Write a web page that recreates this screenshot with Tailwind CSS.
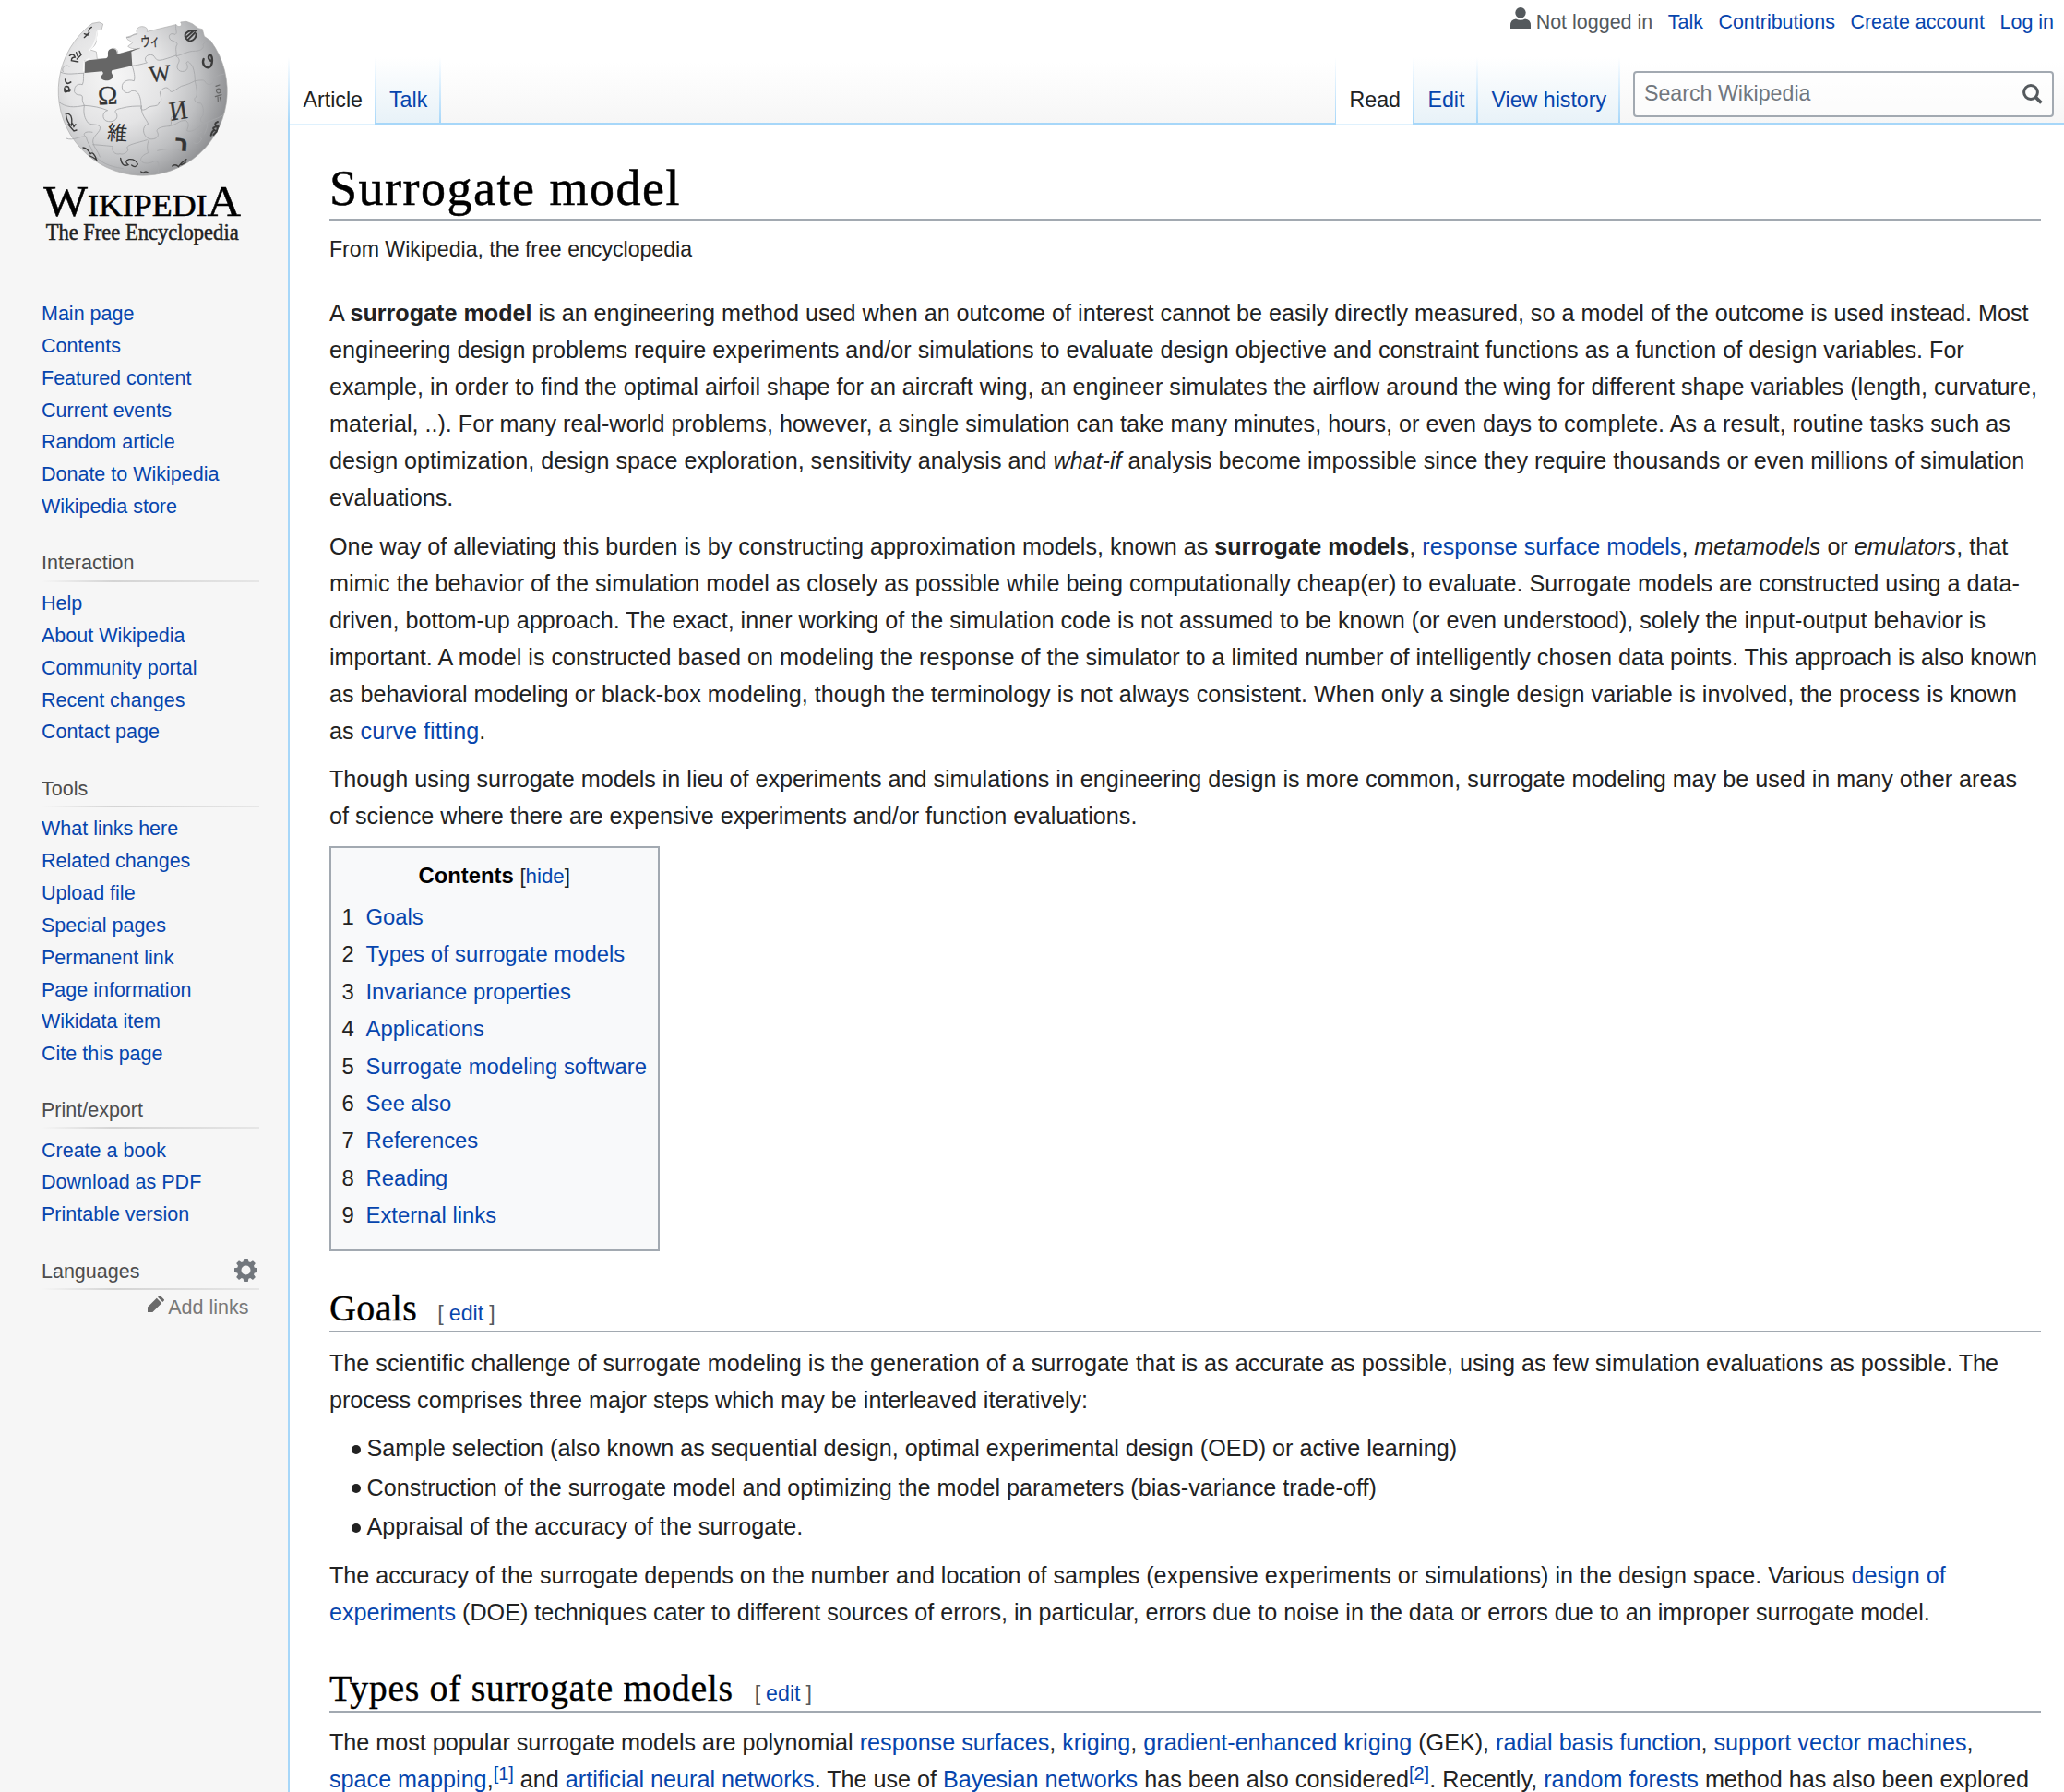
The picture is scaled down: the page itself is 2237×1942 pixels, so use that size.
<!DOCTYPE html>
<html lang="en">
<head>
<meta charset="utf-8">
<title>Surrogate model - Wikipedia</title>
<script src="https://cdn.jsdelivr.net/npm/@tailwindcss/browser@4"></script>
</head>
<body class="bg-[#f6f6f6] font-['Liberation_Sans',Arial,sans-serif] text-[#222]">
<div class="flex h-[1942px] w-[2237px] overflow-hidden">

  <!-- Sidebar -->
  <aside class="h-full w-[312px] shrink-0 bg-[linear-gradient(#fff_0,#fff_67px,#f6f6f6_134px)] text-[21.5px] text-[#0645ad]">
    <svg class="block h-[290px] w-[312px]" viewBox="0 0 936 870" font-family="'Liberation Serif', 'Noto Sans CJK JP', 'DejaVu Sans', serif">
      <defs>
        <radialGradient id="ball" gradientUnits="userSpaceOnUse" cx="370" cy="250" r="400">
          <stop offset="0" stop-color="#f6f6f6"/><stop offset=".4" stop-color="#e4e4e5"/><stop offset=".7" stop-color="#bebfc1"/><stop offset="1" stop-color="#858689"/>
        </radialGradient>
      </defs>
      <path fill="url(#ball)" stroke="#aaa" stroke-width="2" d="M300 76L322 72 335 78 330 97 315 98C321 112 308 124 313 134C310 150 298 156 294 162L313 168 316 192 352 190C355 182 348 168 360 160C375 152 385 162 383 176L455 157C440 162 418 156 416 150L430 140C425 130 412 132 412 121L447 110C440 100 445 88 460 86C475 86 482 94 478 103L572 80C582 92 596 84 587 72L606 70 625 77 645 92 658 95 664 118 685 133A274.5 274.5 0 1 1 300 76Z"/>
      <path fill="#666" d="M274 197L345 190C357 184 346 174 354 163C364 154 384 158 380 177L455 155 427 168 430 214 364 229C358 239 372 243 364 255C354 266 330 264 327 249C331 245 340 240 332 232L275 237Z"/>
      <path fill="none" stroke="#fff" stroke-width="5" opacity=".75" d="M272 232L274 200 292 190M317 98Q312 145 290 165"/>
      <g fill="none" stroke="#a7a8aa" stroke-width="2.6" stroke-linecap="round">
        <path d="M272 238C270 252 274 262 268 275C250 270 240 282 242 299C250 315 266 303 268 315C266 330 272 336 274 343"/>
        <path d="M192 332C215 350 240 350 274 343C300 344 330 350 350 359C334 362 330 385 345 393C365 400 385 390 380 372C370 360 375 356 395 352C420 345 440 345 460 345"/>
        <path d="M430 214C436 235 440 250 436 263C415 256 395 265 397 285C402 306 420 304 427 296C440 292 452 300 456 320C460 335 457 340 460 345C452 357 466 362 478 352C490 340 515 350 517 335"/>
        <path d="M460 345C458 375 475 385 482 403C460 410 462 440 485 452C505 455 520 445 512 430C505 420 520 412 550 410C565 402 548 388 560 378"/>
        <path d="M430 214C460 210 470 205 478 204C463 190 480 172 498 180C508 190 506 200 530 194C550 188 560 185 572 180"/>
        <path d="M412 121C430 125 425 110 445 110M572 80C570 100 578 106 570 112C550 104 545 120 555 130C575 138 580 140 573 150C570 165 575 170 573 182C582 190 585 195 580 205C570 220 580 235 598 232C612 228 612 215 606 205C610 195 615 202 626 215C633 235 634 250 634 263"/>
        <path d="M517 335C530 325 522 318 520 300C530 282 548 280 552 295C560 305 570 290 590 280C610 275 620 270 634 263C655 260 665 258 668 268C680 282 698 272 695 255C705 245 715 243 730 240"/>
        <path d="M573 182C590 180 610 165 635 166C655 165 665 155 660 145C670 130 675 135 685 133"/>
        <path d="M634 263C640 290 642 305 638 315C625 322 638 338 652 335C662 345 662 360 660 375C645 390 655 402 668 398C680 400 672 420 665 435"/>
        <path d="M550 410C580 405 580 390 605 392C618 402 610 415 608 425C620 432 640 420 660 402C690 390 710 385 724 375"/>
        <path d="M274 343C270 370 275 385 287 400C300 408 318 402 325 412C330 430 300 440 302 462C305 480 318 490 325 510"/>
        <path d="M302 470C330 472 350 474 367 476C360 490 375 505 390 500C402 505 425 490 413 480C415 470 445 465 478 455"/>
        <path d="M485 452C475 475 480 490 482 497C458 505 448 525 470 530C490 535 500 520 512 525C522 545 510 555 515 565"/>
        <path d="M512 490C545 482 550 485 578 485C590 500 605 490 600 478M628 462C640 475 655 460 655 450C640 440 635 435 655 430"/>
        <path d="M198 235C220 245 240 238 272 238M225 216C210 205 198 225 205 233M215 450C240 460 260 440 280 445C265 435 278 425 300 430M280 445C285 470 300 480 302 500C330 530 350 540 400 548"/>
      </g>
      <g fill="#333" stroke="#333" stroke-width="1" text-anchor="middle">
        <text x="350" y="339" font-size="86" transform="rotate(-3 350 310)">Ω</text>
        <text x="520" y="264" font-size="74" transform="rotate(-7 520 240)">W</text>
        <text x="580" y="388" font-size="88" textLength="58" lengthAdjust="spacingAndGlyphs" transform="rotate(-9 580 360)">И</text>
        <text x="382" y="456" font-size="66" stroke="none" transform="rotate(4 382 433)">維</text>
        <text x="488" y="151" font-size="46" textLength="62" lengthAdjust="spacingAndGlyphs" transform="rotate(-4 488 135)">ウィ</text>
        <text x="590" y="491" font-size="74" font-weight="bold" font-family="DejaVu Sans" transform="rotate(4 590 470)">ר</text>
      </g>
      <g fill="none" stroke="#3c3c3c" stroke-width="6" stroke-linecap="round">
        <path stroke-width="7" d="M662 192C656 206 664 219 678 220C694 215 692 178 683 178C674 184 678 196 687 198"/>
        <path d="M602 112Q612 96 637 100M604 122L628 101M610 130L634 106M618 134Q638 128 638 110M602 112Q600 128 618 134"/>
        <path stroke-width="4" d="M226 181Q240 172 244 186Q232 186 232 197L254 201M258 166L264 178L250 192M248 170L252 182"/>
        <path stroke-width="5" d="M212 258Q213 278 230 267M212 282Q226 278 224 292Q208 308 210 288Q226 304 228 291"/>
        <path stroke-width="4" d="M214 370Q218 400 232 408Q236 390 230 376Q222 366 214 370M222 405L240 426L249 423M236 402L240 412L246 404"/>
        <path stroke-width="4" d="M270 480Q282 480 294 500Q304 490 314 520Q302 510 290 506M392 514Q396 544 417 536Q402 524 420 518Q440 516 448 534Q440 548 428 537"/>
        <path stroke-width="4" d="M560 540Q572 532 580 542Q590 528 606 518M590 536L604 528M458 558L466 562Q474 554 482 562"/>
        <path stroke-width="3.5" stroke="#666" d="M702 280L714 276M705 290Q718 284 717 300Q705 308 703 292M700 314L720 308M708 312L709 330M715 316L719 332"/>
        <path d="M708 396Q692 402 706 412Q686 414 698 424Q690 424 686 440M710 408L704 428L694 438"/>
        <path stroke-width="4" d="M298 88Q284 96 290 106L274 122M274 110L286 114"/>
      </g>
      <g fill="#000" stroke="#000" stroke-width="1.500">
        <text x="142" y="701" font-size="138" textLength="641" lengthAdjust="spacingAndGlyphs">W<tspan font-size="98">IKIPEDI</tspan>A</text>
        <text x="149" y="780" font-size="74" fill="#222" stroke="#222" textLength="627" lengthAdjust="spacingAndGlyphs">The Free Encyclopedia</text>
      </g>
    </svg>

    <nav class="ml-[45px] mt-[33px] w-[236px] leading-[34.85px]">
      <ul>
        <li>Main page</li><li>Contents</li><li>Featured content</li><li>Current events</li><li>Random article</li><li>Donate to Wikipedia</li><li>Wikipedia store</li>
      </ul>
      <h3 class="mt-[28.5px] leading-[30px] text-[#4d4d4d]">Interaction</h3>
      <div class="mb-[6.4px] mt-[3.2px] h-[2px] bg-linear-to-r from-[#f6f6f6] via-[#d4d4d4] via-33% to-[#e6e6e6]"></div>
      <ul>
        <li>Help</li><li>About Wikipedia</li><li>Community portal</li><li>Recent changes</li><li>Contact page</li>
      </ul>
      <h3 class="mt-[28.5px] leading-[30px] text-[#4d4d4d]">Tools</h3>
      <div class="mb-[6.4px] mt-[3.2px] h-[2px] bg-linear-to-r from-[#f6f6f6] via-[#d4d4d4] via-33% to-[#e6e6e6]"></div>
      <ul>
        <li>What links here</li><li>Related changes</li><li>Upload file</li><li>Special pages</li><li>Permanent link</li><li>Page information</li><li>Wikidata item</li><li>Cite this page</li>
      </ul>
      <h3 class="mt-[28px] leading-[30px] text-[#4d4d4d]">Print/export</h3>
      <div class="mb-[6.4px] mt-[3.2px] h-[2px] bg-linear-to-r from-[#f6f6f6] via-[#d4d4d4] via-33% to-[#e6e6e6]"></div>
      <ul>
        <li>Create a book</li><li>Download as PDF</li><li>Printable version</li>
      </ul>
      <div class="mt-[28.5px] flex h-[30px] items-center justify-between leading-[30px] text-[#4d4d4d]">
        <h3>Languages</h3>
        <svg class="-mt-[2px] mr-[2px] size-[25px]" viewBox="0 0 20 20" fill="#72777d"><path fill-rule="evenodd" d="M8.2 0h3.6l.5 2.6 1.5.6L16 1.7 18.3 4l-1.5 2.2.6 1.5 2.6.5v3.6l-2.6.5-.6 1.5 1.5 2.2-2.3 2.3-2.2-1.5-1.5.6-.5 2.6H8.200l-.5-2.600-1.500-.6L4 18.300 1.700 16l1.500-2.200-.6-1.500L0 11.800V8.200l2.600-.5.6-1.500L1.700 4 4 1.700l2.200 1.500 1.500-.6zM10 6a4 4 0 100 8 4 4 0 000-8z"/></svg>
      </div>
      <div class="mt-[3.2px] h-[2px] bg-linear-to-r from-[#f6f6f6] via-[#d4d4d4] via-33% to-[#e6e6e6]"></div>
      <div class="mt-[3.500px] flex justify-end gap-[4px] pr-[11.500px] leading-[32px] text-[#797979]">
        <svg class="mt-[2.500px] size-[18px]" viewBox="0 0 18 18" fill="#6a6a6a"><path d="M0 18v-5.500L9.800 2.800l5.400 5.400L5.400 18zM11 1.700L12.600.2q.6-.5 1.200 0l4 4q.5.6 0 1.200L16.300 7z"/></svg>
        <span>Add links</span>
      </div>
    </nav>
  </aside>

  <div class="flex h-full w-[1925px] shrink-0 flex-col">
    <!-- Header with personal links and tabs -->
    <header class="flex h-[133px] shrink-0 flex-col justify-between bg-[linear-gradient(#fff_0,#fff_67px,#f6f6f6_134px)]">
      <div class="flex h-[48px] justify-end gap-[16.500px] pr-[11px] text-[21.480px] leading-[48px] text-[#0645ad]">
        <div class="flex text-[#54595d]">
          <svg class="mr-[6px] mt-[8px] h-[23px] w-[22px]" viewBox="0 0 22 23" fill="#54595d"><ellipse cx="11" cy="5.800" rx="5.700" ry="5.800"/><path d="M0 23v-3.500Q0 13 6 12.500Q11 15 16 12.500Q22 13 22 19.500V23z"/></svg>
          <span>Not logged in</span>
        </div>
        <span>Talk</span><span>Contributions</span><span>Create account</span><span>Log in</span>
      </div>
      <div class="flex h-[71px] text-[23.200px] leading-[92px] text-[#0645ad]">
        <div class="w-[2px] bg-linear-to-b from-white to-[#a7d7f9]"></div>
        <div class="h-[72px] w-[92px] bg-white pl-[14.500px] text-[#222]">Article</div>
        <div class="h-[72px] w-[2px] bg-linear-to-b from-white to-[#a7d7f9]"></div>
        <div class="w-[68px] bg-linear-to-b from-white to-[#e8f2f8] pl-[14px]">Talk</div>
        <div class="w-[2px] bg-linear-to-b from-white to-[#a7d7f9]"></div>
        <div class="flex-1"></div>
        <div class="w-[1px] bg-linear-to-b from-white to-[#a7d7f9]"></div>
        <div class="h-[72px] w-[83px] bg-white pl-[14.500px] text-[#222]">Read</div>
        <div class="h-[72px] w-[2px] bg-linear-to-b from-white to-[#a7d7f9]"></div>
        <div class="w-[67px] bg-linear-to-b from-white to-[#e8f2f8] pl-[14.500px]">Edit</div>
        <div class="w-[2px] bg-linear-to-b from-white to-[#a7d7f9]"></div>
        <div class="w-[152px] whitespace-nowrap bg-linear-to-b from-white to-[#e8f2f8] pl-[14.500px]">View history</div>
        <div class="w-[2px] bg-linear-to-b from-white to-[#a7d7f9]"></div>
        <div class="ml-[14px] mr-[11px] mt-[15px] flex h-[50px] w-[456px] items-center justify-between rounded-[4px] border-2 border-[#a2a9b1] bg-white/50 pl-[10px] pr-[10px] leading-[44px] text-[#72777d]">
          <span class="-mt-[3px]">Search Wikipedia</span>
          <svg class="size-[22px]" viewBox="0 0 22 22" fill="none" stroke="#54595d"><circle cx="9" cy="9" r="7.400" stroke-width="3"/><path d="M14 14l6.500 6.500" stroke-width="3.800"/></svg>
        </div>
      </div>
    </header>

    <main class="flex-1 border-l-2 border-[#a7d7f9] bg-white">
      <!-- Blue rule under the tabs, lighter below the selected ones -->
      <div class="flex h-[2px] bg-[#a7d7f9]">
        <div class="w-[92px] border-b border-[#dff1fd] bg-white"></div>
        <div class="w-[1042px]"></div>
        <div class="w-[83px] border-b border-[#dff1fd] bg-white"></div>
      </div>
      <article class="w-[1898px] whitespace-nowrap pl-[43px] text-[25.165px] leading-[40px]">
        <h1 class="border-b-2 border-[#a2a9b1] pb-px pt-[37px] font-['Liberation_Serif',serif] text-[54px] leading-[64px] tracking-[1.500px] text-black [-webkit-text-stroke:.5px_#000]">Surrogate model</h1>
        <div class="mb-[32.700px] mt-[15px] text-[23.120px] leading-[32px]">From Wikipedia, the free encyclopedia</div>
        <p>A <b>surrogate model</b> is an engineering method used when an outcome of interest cannot be easily directly measured, so a model of the outcome is used instead. Most<br>
        engineering design problems require experiments and/or simulations to evaluate design objective and constraint functions as a function of design variables. For<br>
        example, in order to find the optimal airfoil shape for an aircraft wing, an engineer simulates the airflow around the wing for different shape variables (length, curvature,<br>
        material, ..). For many real-world problems, however, a single simulation can take many minutes, hours, or even days to complete. As a result, routine tasks such as<br>
        design optimization, design space exploration, sensitivity analysis and <i>what-if</i> analysis become impossible since they require thousands or even millions of simulation<br>
        evaluations.</p>
        <p class="mt-[13px]">One way of alleviating this burden is by constructing approximation models, known as <b>surrogate models</b>, <a class="text-[#0645ad]">response surface models</a>, <i>metamodels</i> or <i>emulators</i>, that<br>
        mimic the behavior of the simulation model as closely as possible while being computationally cheap(er) to evaluate. Surrogate models are constructed using a data-<br>
        driven, bottom-up approach. The exact, inner working of the simulation code is not assumed to be known (or even understood), solely the input-output behavior is<br>
        important. A model is constructed based on modeling the response of the simulator to a limited number of intelligently chosen data points. This approach is also known<br>
        as behavioral modeling or black-box modeling, though the terminology is not always consistent. When only a single design variable is involved, the process is known<br>
        as <a class="text-[#0645ad]">curve fitting</a>.</p>
        <p class="mt-[12px]">Though using surrogate models in lieu of experiments and simulations in engineering design is more common, surrogate modeling may be used in many other areas<br>
        of science where there are expensive experiments and/or function evaluations.</p>

        <div class="mt-[13.300px] h-[439px] w-[358px] border-2 border-[#a2a9b1] bg-[#f8f9fa] pl-[11.500px] pt-[10px] text-[23.820px] leading-[40.400px]">
          <div class="-ml-[12px] mb-[3.500px] text-center"><b class="text-black">Contents</b> <span class="text-[22.300px]">[<a class="text-[#0645ad]">hide</a>]</span></div>
          <div class="grid grid-cols-[26px_1fr]">
            <span>1</span><a class="text-[#0645ad]">Goals</a>
            <span>2</span><a class="text-[#0645ad]">Types of surrogate models</a>
            <span>3</span><a class="text-[#0645ad]">Invariance properties</a>
            <span>4</span><a class="text-[#0645ad]">Applications</a>
            <span>5</span><a class="text-[#0645ad]">Surrogate modeling software</a>
            <span>6</span><a class="text-[#0645ad]">See also</a>
            <span>7</span><a class="text-[#0645ad]">References</a>
            <span>8</span><a class="text-[#0645ad]">Reading</a>
            <span>9</span><a class="text-[#0645ad]">External links</a>
          </div>
        </div>

        <h2 class="mt-[38.500px] flex h-[49.500px] items-baseline gap-[22px] border-b-2 border-[#a2a9b1] font-['Liberation_Serif',serif] text-[40px] leading-[48px] tracking-[.4px] text-black [-webkit-text-stroke:.35px_#000]">Goals
          <span class="flex gap-[6px] font-['Liberation_Sans',sans-serif] text-[23.200px] tracking-normal text-[#54595d] [-webkit-text-stroke:0]">[<a class="text-[#0645ad]">edit</a>]</span></h2>
        <p class="mt-[12.800px]">The scientific challenge of surrogate modeling is the generation of a surrogate that is as accurate as possible, using as few simulation evaluations as possible. The<br>
        process comprises three major steps which may be interleaved iteratively:</p>
        <ul class="mt-[12.500px] [&>li]:mb-[2.500px] [&>li]:flex [&>li]:items-center [&>li]:gap-[7px] [&>li]:pl-[23.500px]">
          <li><i class="mt-[3px] size-[10px] rounded-full bg-[#222]"></i>Sample selection (also known as sequential design, optimal experimental design (OED) or active learning)</li>
          <li><i class="mt-[3px] size-[10px] rounded-full bg-[#222]"></i>Construction of the surrogate model and optimizing the model parameters (bias-variance trade-off)</li>
          <li><i class="mt-[3px] size-[10px] rounded-full bg-[#222]"></i>Appraisal of the accuracy of the surrogate.</li>
        </ul>
        <p class="mt-[12.300px]">The accuracy of the surrogate depends on the number and location of samples (expensive experiments or simulations) in the design space. Various <a class="text-[#0645ad]">design of</a><br>
        <a class="text-[#0645ad]">experiments</a> (DOE) techniques cater to different sources of errors, in particular, errors due to noise in the data or errors due to an improper surrogate model.</p>

        <h2 class="mt-[39.800px] flex h-[49.500px] items-baseline gap-[23px] border-b-2 border-[#a2a9b1] font-['Liberation_Serif',serif] text-[40px] leading-[48px] tracking-[.6px] text-black [-webkit-text-stroke:.35px_#000]">Types of surrogate models
          <span class="flex gap-[6px] font-['Liberation_Sans',sans-serif] text-[23.200px] tracking-normal text-[#54595d] [-webkit-text-stroke:0]">[<a class="text-[#0645ad]">edit</a>]</span></h2>
        <p class="mt-[12.500px]">The most popular surrogate models are polynomial <a class="text-[#0645ad]">response surfaces</a>, <a class="text-[#0645ad]">kriging</a>, <a class="text-[#0645ad]">gradient-enhanced kriging</a> (GEK), <a class="text-[#0645ad]">radial basis function</a>, <a class="text-[#0645ad]">support vector machines</a>,<br>
        <a class="text-[#0645ad]">space mapping</a>,<sup class="-top-[8px] text-[20px] leading-none text-[#0645ad]">[1]</sup> and <a class="text-[#0645ad]">artificial neural networks</a>. The use of <a class="text-[#0645ad]">Bayesian networks</a> has been also considered<sup class="-top-[8px] text-[20px] leading-none text-[#0645ad]">[2]</sup>. Recently, <a class="text-[#0645ad]">random forests</a> method has also been explored</p>
      </article>
    </main>
  </div>
</div>
</body>
</html>
